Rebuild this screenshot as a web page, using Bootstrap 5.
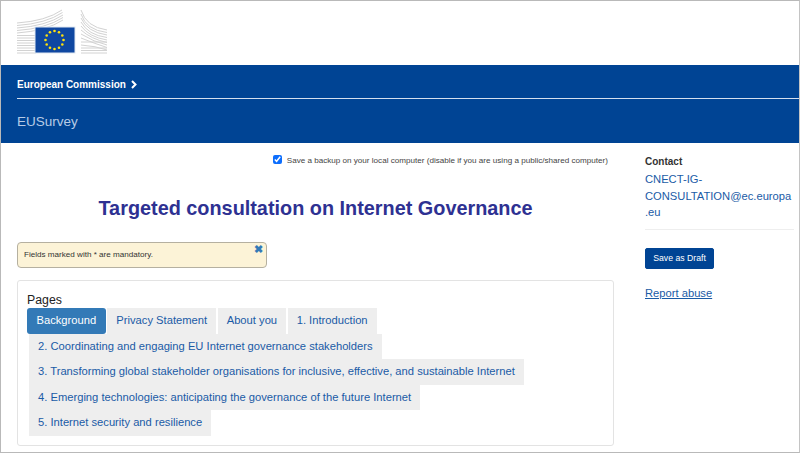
<!DOCTYPE html>
<html lang="en">
<head>
<meta charset="utf-8">
<title>EUSurvey</title>
<link href="https://cdn.jsdelivr.net/npm/bootstrap@5.3.0/dist/css/bootstrap.min.css" rel="stylesheet">
<style>
html,body{height:453px;overflow:hidden}
body{font-family:"Liberation Sans",Arial,sans-serif;color:#333;background:#fff}
.frame{height:453px;border:1px solid #b9b9b9;border-right-color:#c4c4c4;overflow:hidden}
.logo-bar{height:64px;padding:8px 0 0 15px}
.logo-bar svg{display:block}
.blue-bar{height:78px;background:#004494;padding:0 0 0 16px}
.crumb{height:34px;line-height:39px;font-size:10px;font-weight:700;color:#fff;border-bottom:1px solid #d4dfee}
.crumb svg{margin-left:5px;vertical-align:-1px}
.site{font-size:13.5px;color:#b6cbe6;line-height:20px;padding-top:12.5px}
.main-col{width:597px;margin-left:16px;flex:none}
.side-col{width:149px;margin-left:31px;flex:none}
.backup{height:24px;padding-top:12px;padding-right:6px;font-size:8.1px;line-height:11px;color:#444}
.backup input{width:9px;height:9px;margin:0 5px 0 0;vertical-align:-1px;accent-color:#0d6efd}
.survey-title{font-size:19.85px;font-weight:700;color:#2e3192;text-align:center;line-height:24px;margin:29px 0 0}
.notice{width:250px;height:26px;margin-top:22px;background:#fcf3d7;border:1px solid #b5b0a0;border-radius:4px;font-size:8.1px;line-height:24px;padding:0 6px;color:#333;position:relative}
.notice-x{position:absolute;top:-1px;right:3px;font-size:11px;font-weight:700;line-height:14px;color:#337ab7}
.pages-box{margin-top:12px;height:166px;border:1px solid #e3e3e3;border-radius:3px;padding:11px 9px 0}
.pages-label{font-size:12.3px;line-height:16px;color:#222;margin-bottom:0}
.tab-wrap{display:flex;flex-wrap:wrap;margin:0;padding:0;list-style:none}
.tab-row{display:flex;width:100%}
.tab-row.sub{padding-left:2px}
.tab-row .nav-link{display:block;height:25.5px;line-height:25px;font-size:11.2px;color:#1a5ba6;background:#eee;padding:0 9px;border-radius:0;margin-right:1.6px}
.tab-row .nav-link.active{background:#337ab7;color:#fff;border-radius:3px;padding:0 9.5px}
.contact-h{font-size:10px;font-weight:700;line-height:14px;color:#333;margin-top:12px}
.contact-mail{display:block;font-size:11.2px;line-height:16.7px;color:#1a5ba6;text-decoration:none;margin-top:2px;width:148px}
.side-rule{margin:8px 0 0;border:0;border-top:1px solid #eee;opacity:1}
.draft{margin-top:18px;width:69px;height:21px;padding:0;font-size:8.7px;line-height:19px;background:#004494;border:1px solid #004494;border-radius:2px;color:#fff}
.abuse{display:block;margin-top:16px;font-size:11.2px;line-height:16px;color:#1a5ba6;text-decoration:underline}
</style>
</head>
<body>
<div class="frame">
  <div class="logo-bar">
    <svg width="92" height="45" viewBox="0 0 92 45" aria-label="European Commission logo">
      <g stroke="#d2d2d2" stroke-width="1" fill="none">
        <path d="M1 14 Q30 12 46 1"/><path d="M1 16.5 Q30 14.5 46.5 3.5"/><path d="M1 19 Q30 17 47 6"/><path d="M1 21.5 Q30 19.5 47 8.5"/><path d="M1 24 Q30 22 47 11"/><path d="M1 26.5 H20"/><path d="M1 29 H20"/><path d="M1 31.5 H20"/><path d="M1 34 H20"/><path d="M1 36.5 H20"/><path d="M1 39 H20"/><path d="M1 41.5 H20"/><path d="M1 44 H20"/>
        <path d="M65 1 Q70 18 91 21"/><path d="M65 5 Q70 21 91 23.5"/><path d="M65 9 Q71 23 91 26"/><path d="M65 13 Q72 26 91 28.5"/><path d="M65 17 Q73 28 91 31"/><path d="M65 21 Q75 30 91 33.5"/><path d="M65 25 Q78 33 91 36"/><path d="M65 29 Q80 35 91 38.5"/><path d="M65 33 H91"/><path d="M65 36 Q80 37 91 41"/><path d="M65 39 H91"/><path d="M65 41.5 H91"/><path d="M65 44 H91"/>
      </g>
      <rect x="19" y="18" width="40" height="26" fill="#0f47a1" stroke="#dfe7f1"/>
      <g fill="#ffe20a">
        <circle cx="38.5" cy="22" r="1.3"/><circle cx="43" cy="23.2" r="1.3"/><circle cx="46.3" cy="26.5" r="1.3"/><circle cx="47.5" cy="31" r="1.3"/><circle cx="46.3" cy="35.5" r="1.3"/><circle cx="43" cy="38.8" r="1.3"/><circle cx="38.5" cy="40" r="1.3"/><circle cx="34" cy="38.8" r="1.3"/><circle cx="30.7" cy="35.5" r="1.3"/><circle cx="29.5" cy="31" r="1.3"/><circle cx="30.7" cy="26.5" r="1.3"/><circle cx="34" cy="23.2" r="1.3"/>
      </g>
    </svg>
  </div>
  <div class="blue-bar">
    <div class="crumb">European Commission<svg width="6" height="9" viewBox="0 0 6 9"><path d="M1 1l3.5 3.5L1 8" fill="none" stroke="#fff" stroke-width="2"/></svg></div>
    <div class="site">EUSurvey</div>
  </div>
  <div class="d-flex">
    <div class="main-col">
      <div class="backup text-end"><input type="checkbox" checked aria-label="backup">Save a backup on your local computer (disable if you are using a public/shared computer)</div>
      <h1 class="survey-title">Targeted consultation on Internet Governance</h1>
      <div class="notice">Fields marked with * are mandatory.<span class="notice-x">✖</span></div>
      <div class="pages-box">
        <div class="pages-label">Pages</div>
        <ul class="tab-wrap">
          <li class="tab-row first"><a class="nav-link active" href="#">Background</a><a class="nav-link" href="#">Privacy Statement</a><a class="nav-link" href="#">About you</a><a class="nav-link" href="#">1. Introduction</a></li>
          <li class="tab-row sub"><a class="nav-link" href="#">2. Coordinating and engaging EU Internet governance stakeholders</a></li>
          <li class="tab-row sub"><a class="nav-link" href="#">3. Transforming global stakeholder organisations for inclusive, effective, and sustainable Internet</a></li>
          <li class="tab-row sub"><a class="nav-link" href="#">4. Emerging technologies: anticipating the governance of the future Internet</a></li>
          <li class="tab-row sub"><a class="nav-link" href="#">5. Internet security and resilience</a></li>
        </ul>
      </div>
    </div>
    <div class="side-col">
      <div class="contact-h">Contact</div>
      <a class="contact-mail" href="#">CNECT-IG-<br>CONSULTATION@ec.europa<br>.eu</a>
      <hr class="side-rule">
      <button type="button" class="btn draft d-block">Save as Draft</button>
      <a class="abuse" href="#">Report abuse</a>
    </div>
  </div>
</div>
<script src="https://cdn.jsdelivr.net/npm/bootstrap@5.3.0/dist/js/bootstrap.bundle.min.js"></script>
</body>
</html>
